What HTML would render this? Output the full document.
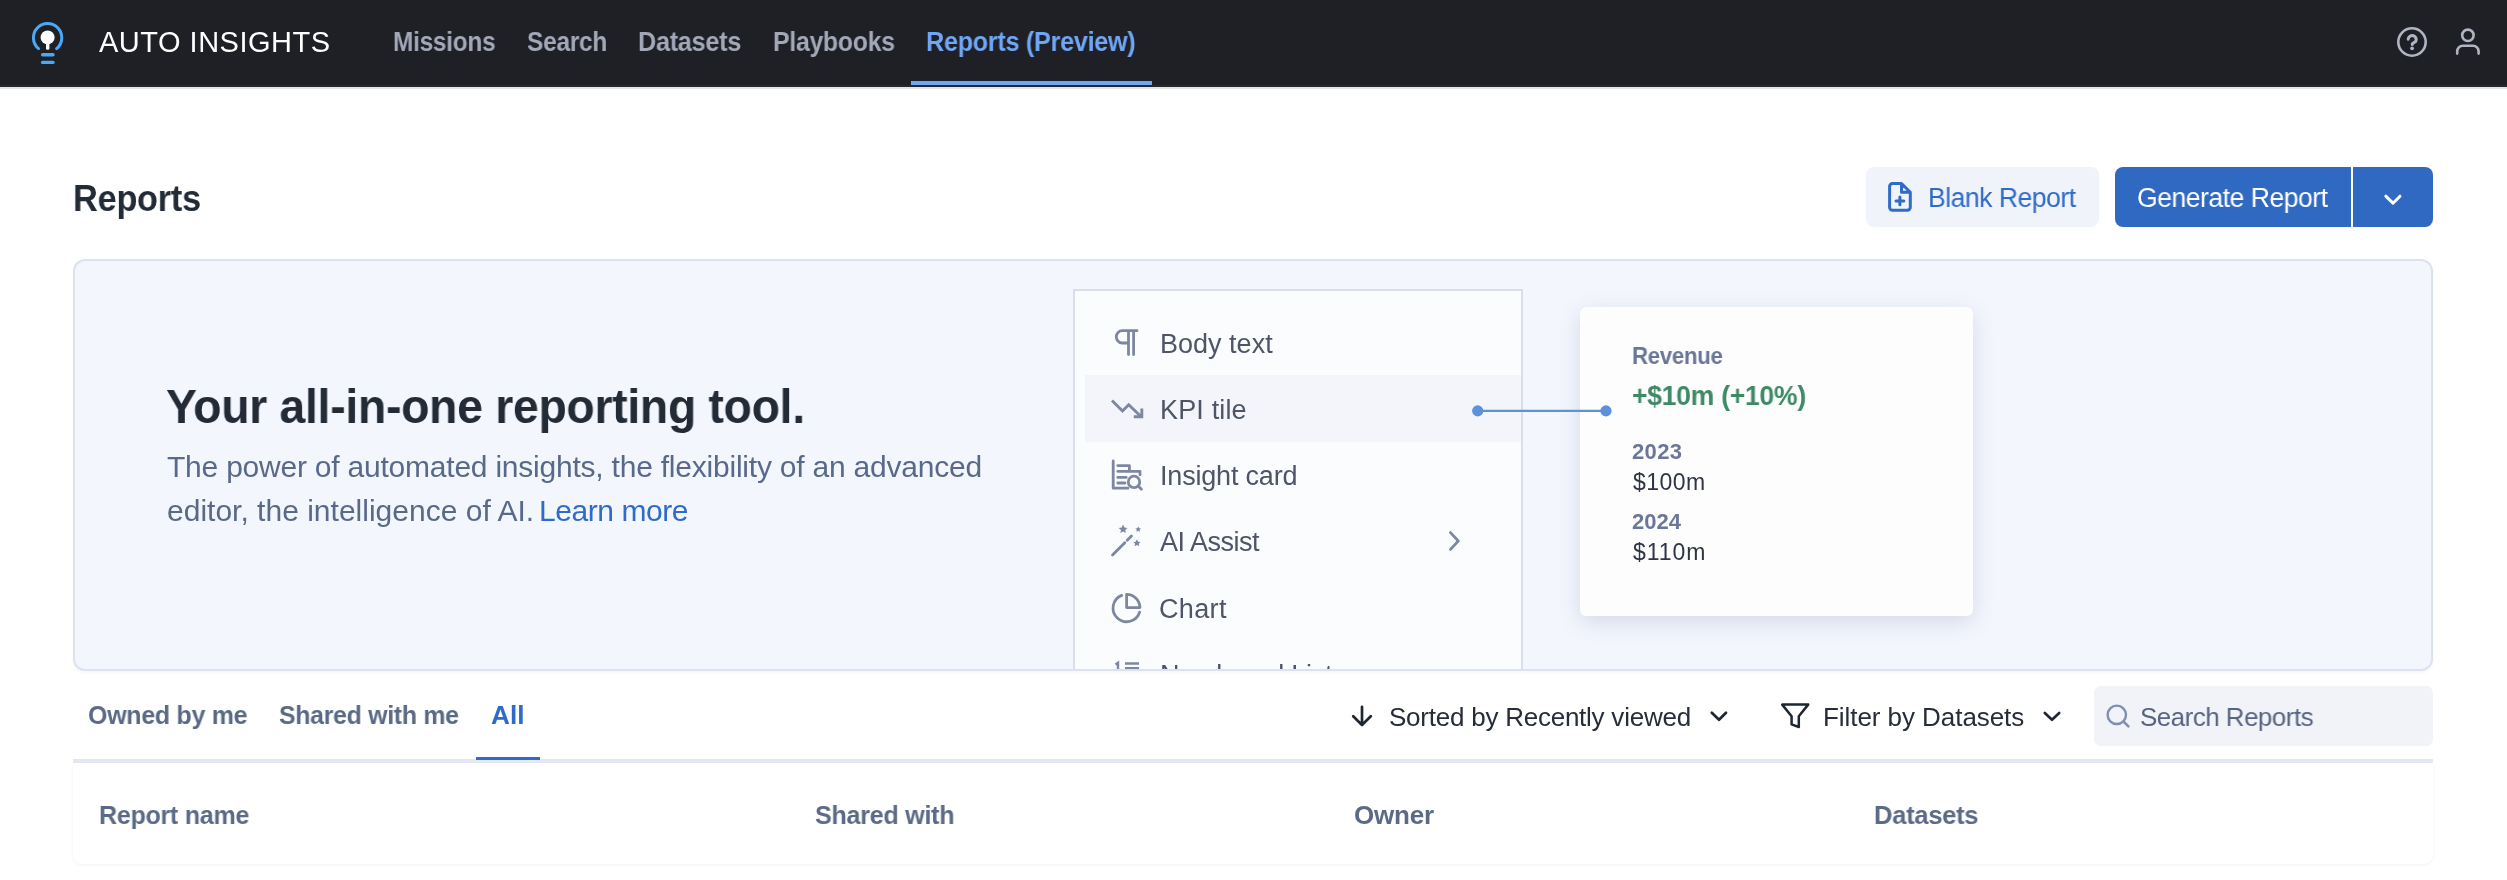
<!DOCTYPE html>
<html><head><meta charset="utf-8"><title>Reports</title>
<style>
html,body{margin:0;padding:0;background:#ffffff;width:2507px;height:880px;overflow:hidden;position:relative;font-family:"Liberation Sans",sans-serif}
.t{position:absolute;white-space:pre;line-height:1;will-change:transform;font-family:"Liberation Sans",sans-serif}
.abs{position:absolute}
svg{position:absolute;left:0;top:0;overflow:visible}
</style></head>
<body>
<!-- NAVBAR -->
<div class="abs" style="left:0;top:0;width:2507px;height:87px;background:#1f2026"></div>
<div class="abs" style="left:0;top:85px;width:2507px;height:2px;background:#262830"></div>
<div class="abs" style="left:0;top:87px;width:2507px;height:2px;background:#e4e4e6"></div>
<div class="abs" style="left:911px;top:81px;width:241px;height:4px;background:#6fa7f6"></div>

<!-- Buttons -->
<div class="abs" style="left:1866px;top:167px;width:233px;height:60px;background:#f0f3f9;border-radius:8px"></div>
<div class="abs" style="left:2115px;top:167px;width:236px;height:60px;background:#2f69c2;border-radius:8px 0 0 8px"></div>
<div class="abs" style="left:2353px;top:167px;width:80px;height:60px;background:#2f69c2;border-radius:0 8px 8px 0"></div>

<!-- BANNER -->
<div class="abs" style="left:73px;top:259px;width:2356px;height:408px;background:#f3f6fd;border:2px solid #dde2ef;border-radius:12px;box-shadow:0 2px 3px rgba(40,50,90,0.04)"></div>
<div class="abs" style="left:75px;top:261px;width:2356px;height:408px;overflow:hidden;border-radius:0 0 10px 10px">
  <div class="abs" style="left:998px;top:28px;width:446px;height:500px;background:#fbfcfe;border:2px solid #d9deea"></div>
  <div class="abs" style="left:1010px;top:114px;width:436px;height:67px;background:#f3f5fa"></div>
</div>
<!-- KPI card -->
<div class="abs" style="left:1580px;top:307px;width:393px;height:309px;background:#fdfdfe;border-radius:6px;box-shadow:0 6px 22px rgba(50,62,105,0.15)"></div>

<!-- tabs line -->
<div class="abs" style="left:73px;top:763px;width:2360px;height:101px;background:#fff;border-radius:0 0 9px 9px;box-shadow:0 1px 3px rgba(40,50,90,0.07)"></div>
<div class="abs" style="left:73px;top:759px;width:2360px;height:3.6px;background:#e3e7f0"></div>
<div class="abs" style="left:476px;top:757px;width:64px;height:3px;background:#2f6bc8"></div>
<!-- search box -->
<div class="abs" style="left:2094px;top:686px;width:339px;height:60px;background:#f1f3f8;border-radius:7px"></div>

<!-- SVG ICONS -->
<svg width="2507" height="880" viewBox="0 0 2507 880" fill="none" stroke-linecap="round" stroke-linejoin="round">
  <!-- logo -->
  <path d="M38.6 48.6 A14.2 14.2 0 1 1 56.6 48.6" stroke="#4aa8f8" stroke-width="3"/>
  <circle cx="47.6" cy="37.4" r="7" fill="#ffffff"/>
  <rect x="46" y="40" width="3.4" height="9.7" rx="1.5" fill="#ffffff"/>
  <rect x="40.9" y="53.1" width="13.8" height="3.5" rx="1.75" fill="#4aa8f8"/>
  <rect x="40.9" y="60.7" width="13.8" height="3.4" rx="1.7" fill="#4aa8f8"/>
  <!-- help -->
  <circle cx="2412" cy="42" r="13.7" stroke="#b0b5c3" stroke-width="2.6"/>
  <path d="M2408.2 39.2 A4 4 0 1 1 2415.6 41.6 L2412.3 43.8 V44.6" stroke="#b0b5c3" stroke-width="3"/>
  <circle cx="2412.1" cy="48.3" r="1.9" fill="#b0b5c3"/>
  <!-- person -->
  <circle cx="2467.9" cy="35.3" r="5.7" stroke="#b0b5c3" stroke-width="2.6"/>
  <path d="M2457.2 53.6 V51.4 A5.6 5.6 0 0 1 2462.8 45.8 H2473 A5.6 5.6 0 0 1 2478.6 51.4 V53.6" stroke="#b0b5c3" stroke-width="2.6"/>
  <!-- blank report icon -->
  <path d="M1901.5 183.5 H1892.6 A3 3 0 0 0 1889.6 186.5 V207.3 A3 3 0 0 0 1892.6 210.3 H1907.3 A3 3 0 0 0 1910.3 207.3 V192.3 Z M1901.5 183.5 V192.3 H1910.3 M1899.9 197 V204.8 M1896 200.9 H1903.8" stroke="#2f6bc8" stroke-width="3"/>
  <!-- generate chevron -->
  <path d="M2385.8 196.2 L2393 203.2 L2400 196.2" stroke="#ffffff" stroke-width="3"/>
  <!-- menu icons -->
  <g stroke="#7d87a0" stroke-width="2.8">
    <path d="M1137 330.7 H1122.4 A6.15 6.15 0 0 0 1122.4 343 H1128.5 M1128.5 330.7 V354.5 M1133.6 330.7 V354.5"/>
    <path d="M1112 400.5 L1122.5 411 L1128.7 404.7 L1141.5 417 M1133.8 416.8 H1141.8 V408.5" stroke-width="2.9" stroke-linecap="butt" stroke-linejoin="miter"/>
    <path d="M1113.2 461 V488.2 H1128 M1117.8 465.6 H1129.4 V471.3 M1117.8 471.3 H1140 V474.8 M1117.8 477.4 H1126.2 M1117.8 483 H1125" />
    <circle cx="1134" cy="481.9" r="5.7"/>
    <path d="M1138.2 486.1 L1141.4 489.3"/>
    <path d="M1112.5 555 L1124.8 542.7 M1127.2 540.3 L1131.5 536"/>
    <path d="M1121.7 595.4 A13.6 13.6 0 1 0 1139.6 612.2" />
    <path d="M1126.6 594.4 V607.6 H1139.9 A13.3 13.3 0 0 0 1126.6 594.4 Z"/>
    <path d="M1450.5 532.6 L1458.3 541 L1450.5 549.4"/>
  </g>
  <g fill="#7d87a0">
    <path d="M1123.1 524.6 L1124.5 527.6 L1127.5 527.9 L1125.2 530 L1125.9 533 L1123.1 531.4 L1120.3 533 L1121 530 L1118.7 527.9 L1121.7 527.6 Z"/>
    <path d="M1138.2 526.3 L1139.1 528.2 L1141.1 528.4 L1139.6 529.8 L1140 531.8 L1138.2 530.7 L1136.4 531.8 L1136.8 529.8 L1135.3 528.4 L1137.3 528.2 Z"/>
    <path d="M1136.9 539.3 L1138.1 541.7 L1140.6 542 L1138.7 543.7 L1139.3 546.2 L1136.9 544.9 L1134.5 546.2 L1135.1 543.7 L1133.2 542 L1135.7 541.7 Z"/>
  </g>
  <!-- connector -->
  <path d="M1477.7 410.9 H1606" stroke="#5b92d9" stroke-width="2.3"/>
  <circle cx="1477.7" cy="410.9" r="5.6" fill="#5b92d9"/>
  <circle cx="1606" cy="410.9" r="5.6" fill="#5b92d9"/>
  <!-- sort/filter -->
  <g stroke="#1f2633" stroke-width="2.7">
    <path d="M1362 706.8 V725 M1353.2 716.2 L1362 725 L1370.8 716.2"/>
    <path d="M1711.8 712.8 L1719 719.8 L1726 712.8"/>
    <path d="M1782.2 704.6 H1808.2 L1798.8 716.2 V727 L1791.6 724.4 V716.2 Z" stroke-width="2.5"/>
    <path d="M2044.8 713 L2052 719.8 L2059.2 713"/>
  </g>
  <circle cx="2116.8" cy="714.8" r="9.2" stroke="#7f8fb0" stroke-width="2.4"/>
  <path d="M2123.6 721.6 L2128.4 726.4" stroke="#7f8fb0" stroke-width="2.6"/>
</svg>

<!-- TEXT -->
<div class="t" style="left:99.0px;top:28.0px;font-size:29px;font-weight:400;letter-spacing:0.5px;color:#ffffff">AUTO INSIGHTS</div><div class="t" style="left:392.8px;top:28.5px;font-size:27px;font-weight:700;letter-spacing:-0.3px;color:#a2a8b8;transform:scaleX(0.9045);transform-origin:0 0">Missions</div><div class="t" style="left:527.1px;top:28.5px;font-size:27px;font-weight:700;letter-spacing:-0.3px;color:#a2a8b8;transform:scaleX(0.9070);transform-origin:0 0">Search</div><div class="t" style="left:638.1px;top:28.5px;font-size:27px;font-weight:700;letter-spacing:-0.3px;color:#a2a8b8;transform:scaleX(0.9352);transform-origin:0 0">Datasets</div><div class="t" style="left:772.7px;top:28.5px;font-size:27px;font-weight:700;letter-spacing:-0.3px;color:#a2a8b8;transform:scaleX(0.9192);transform-origin:0 0">Playbooks</div><div class="t" style="left:925.7px;top:28.5px;font-size:27px;font-weight:700;letter-spacing:-0.3px;color:#6fa7f6;transform:scaleX(0.9329);transform-origin:0 0">Reports (Preview)</div>
<div class="t" style="left:73.1px;top:181.0px;font-size:36px;font-weight:700;letter-spacing:-0.3px;color:#232b37;transform:scaleX(0.9542);transform-origin:0 0">Reports</div><div class="t" style="left:1927.6px;top:185.0px;font-size:27px;font-weight:400;letter-spacing:-0.5px;color:#2f6bc8;transform:scaleX(0.9839);transform-origin:0 0">Blank Report</div><div class="t" style="left:2137.0px;top:185.0px;font-size:27px;font-weight:400;letter-spacing:-0.5px;color:#ffffff;transform:scaleX(0.9845);transform-origin:0 0">Generate Report</div>
<div class="t" style="left:166.3px;top:382.4px;font-size:49px;font-weight:700;letter-spacing:-0.3px;color:#232b37;transform:scaleX(0.9454);transform-origin:0 0">Your all-in-one reporting tool.</div><div class="t" style="left:166.7px;top:452.0px;font-size:30px;font-weight:400;letter-spacing:-0.222px;color:#59698a">The power of automated insights, the flexibility of an advanced</div><div class="t" style="left:166.8px;top:496.0px;font-size:30px;font-weight:400;letter-spacing:0.008px;color:#59698a">editor, the intelligence of AI.</div><div class="t" style="left:538.9px;top:496.0px;font-size:30px;font-weight:400;letter-spacing:-0.433px;color:#2f6bc8">Learn more</div>
<div class="t" style="left:1159.6px;top:330.5px;font-size:27px;font-weight:400;letter-spacing:0.013px;color:#4d5566">Body text</div><div class="t" style="left:1159.6px;top:396.5px;font-size:27px;font-weight:400;letter-spacing:0.157px;color:#4d5566">KPI tile</div><div class="t" style="left:1160.4px;top:463.0px;font-size:27px;font-weight:400;letter-spacing:-0.191px;color:#4d5566">Insight card</div><div class="t" style="left:1160.3px;top:529.0px;font-size:27px;font-weight:400;letter-spacing:-0.5px;color:#4d5566">AI Assist</div><div class="t" style="left:1159.3px;top:595.5px;font-size:27px;font-weight:400;letter-spacing:0.3px;color:#4d5566;transform:scaleX(1.0030);transform-origin:0 0">Chart</div>
<div class="abs" style="left:0;top:0;width:2507px;height:669px;overflow:hidden">
<div class="t" style="left:1160.0px;top:662.0px;font-size:27px;font-weight:400;letter-spacing:-0.25px;color:#4d5566">Numbered List</div>
<svg width="2507" height="880" viewBox="0 0 2507 880" fill="none">
  <path d="M1115.5 664.5 L1118 662.8 V672" stroke="#7d87a0" stroke-width="2.4"/>
  <path d="M1125 663.5 H1139 M1125 668.2 H1139" stroke="#7d87a0" stroke-width="2.4"/>
</svg>
</div>
<div class="t" style="left:1632.3px;top:344.7px;font-size:23px;font-weight:700;letter-spacing:-0.3px;color:#69769a;transform:scaleX(0.9663);transform-origin:0 0">Revenue</div><div class="t" style="left:1632.2px;top:382.2px;font-size:28px;font-weight:700;letter-spacing:-0.3px;color:#3e8a65;transform:scaleX(0.9492);transform-origin:0 0">+$10m (+10%)</div><div class="t" style="left:1631.9px;top:440.5px;font-size:22px;font-weight:700;letter-spacing:0.367px;color:#6b7799">2023</div><div class="t" style="left:1633.2px;top:471.3px;font-size:23px;font-weight:400;letter-spacing:0.45px;color:#2e3646">$100m</div><div class="t" style="left:1631.9px;top:511.3px;font-size:22px;font-weight:700;letter-spacing:0.033px;color:#6b7799">2024</div><div class="t" style="left:1633.2px;top:541.3px;font-size:23px;font-weight:400;letter-spacing:0.95px;color:#2e3646">$110m</div>
<div class="t" style="left:88.4px;top:702.3px;font-size:26px;font-weight:700;letter-spacing:-0.3px;color:#5a6a85;transform:scaleX(0.9610);transform-origin:0 0">Owned by me</div><div class="t" style="left:279.0px;top:702.3px;font-size:26px;font-weight:700;letter-spacing:-0.3px;color:#5a6a85;transform:scaleX(0.9561);transform-origin:0 0">Shared with me</div><div class="t" style="left:491.2px;top:702.3px;font-size:26px;font-weight:700;letter-spacing:0.1px;color:#2f6bc8;transform:scaleX(1.0065);transform-origin:0 0">All</div>
<div class="t" style="left:1389.0px;top:703.8px;font-size:26px;font-weight:400;letter-spacing:-0.238px;color:#262d3a">Sorted by Recently viewed</div><div class="t" style="left:1823.0px;top:703.8px;font-size:26px;font-weight:400;letter-spacing:-0.059px;color:#262d3a">Filter by Datasets</div><div class="t" style="left:2139.9px;top:704.0px;font-size:26px;font-weight:400;letter-spacing:-0.5px;color:#56647f;transform:scaleX(0.9965);transform-origin:0 0">Search Reports</div>
<div class="t" style="left:99.0px;top:802.0px;font-size:26px;font-weight:700;letter-spacing:-0.3px;color:#5b6a87;transform:scaleX(0.9641);transform-origin:0 0">Report name</div><div class="t" style="left:815.0px;top:802.0px;font-size:26px;font-weight:700;letter-spacing:-0.3px;color:#5b6a87;transform:scaleX(0.9669);transform-origin:0 0">Shared with</div><div class="t" style="left:1354.0px;top:802.0px;font-size:26px;font-weight:700;letter-spacing:-0.225px;color:#5b6a87">Owner</div><div class="t" style="left:1874.0px;top:802.0px;font-size:26px;font-weight:700;letter-spacing:-0.3px;color:#5b6a87;transform:scaleX(0.9835);transform-origin:0 0">Datasets</div>
</body></html>
